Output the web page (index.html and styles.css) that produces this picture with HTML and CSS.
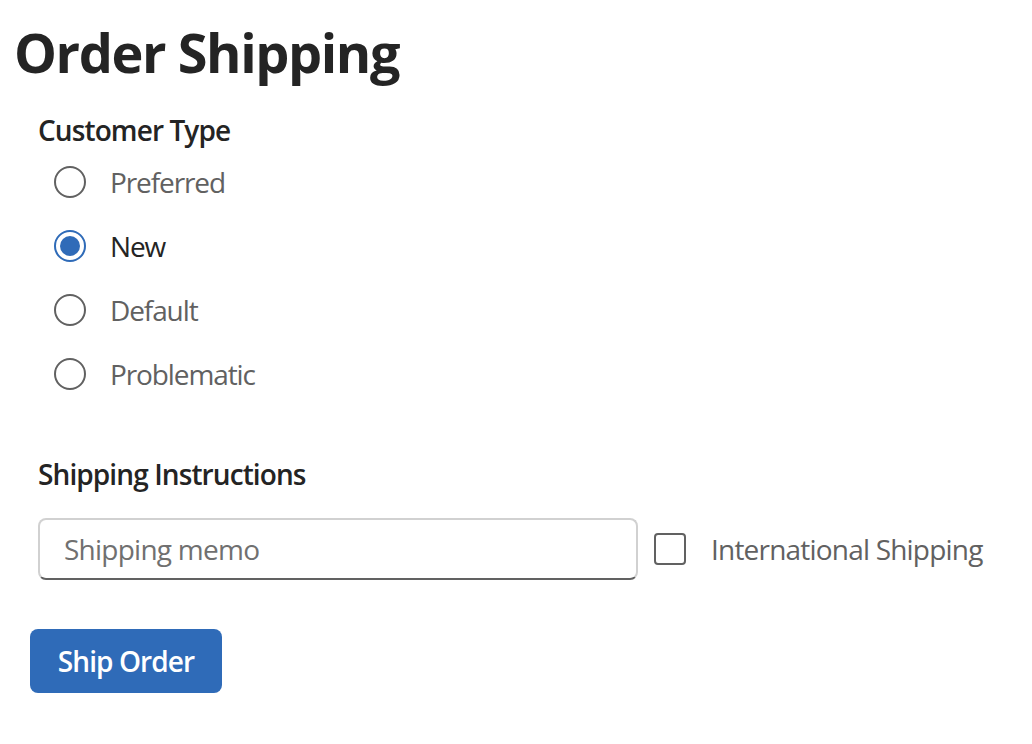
FILE: index.html
```html
<!DOCTYPE html>
<html lang="en">
<head>
<meta charset="utf-8">
<title>Order Shipping</title>
<link rel="stylesheet" href="styles.css">
</head>
<body>
<main class="page">
  <h1 class="title">Order Shipping</h1>
  <form class="form">
    <div class="fields">
      <div class="field">
        <div class="field-label">Customer Type</div>
        <div class="radio-group" role="radiogroup">
          <label class="radio"><input type="radio" name="ctype" value="preferred"><span class="radio-indicator"></span><span class="radio-label">Preferred</span></label>
          <label class="radio"><input type="radio" name="ctype" value="new" checked><span class="radio-indicator"></span><span class="radio-label">New</span></label>
          <label class="radio"><input type="radio" name="ctype" value="default"><span class="radio-indicator"></span><span class="radio-label">Default</span></label>
          <label class="radio"><input type="radio" name="ctype" value="problematic"><span class="radio-indicator"></span><span class="radio-label">Problematic</span></label>
        </div>
      </div>
      <div class="field field-shipping">
        <div class="field-label">Shipping Instructions</div>
        <div class="shipping-row">
          <div class="input-wrap"><input class="text-input" type="text" placeholder="Shipping memo"></div>
          <label class="checkbox"><input type="checkbox"><span class="checkbox-box"></span><span class="checkbox-label">International Shipping</span></label>
        </div>
      </div>
    </div>
    <div class="actions">
      <button type="button" class="btn-primary">Ship Order</button>
    </div>
  </form>
</main>
</body>
</html>
```

FILE: styles.css
```css
* { box-sizing: border-box; }

html, body {
  margin: 0;
  padding: 0;
  background: #ffffff;
}

body {
  font-family: "Segoe UI", "Open Sans", "Noto Sans", sans-serif;
  color: #242424;
}

.page {
  padding-left: 14px;
}

.title {
  margin: 20px 0 0 0;
  font-size: 54px;
  line-height: 64px;
  font-weight: 700;
  letter-spacing: -1.4px;
  color: #242424;
}

.fields {
  padding-left: 24px;
}

.field-label {
  font-size: 28px;
  line-height: 40px;
  padding-top: 4px;
  font-weight: 600;
  letter-spacing: -0.9px;
  color: #242424;
}

.field:first-child .field-label {
  margin-top: 22px;
}

.radio-group {
  display: flex;
  flex-direction: column;
}

.radio {
  display: flex;
  align-items: center;
  height: 64px;
  cursor: pointer;
}

.radio input,
.checkbox input {
  position: absolute;
  opacity: 0;
  width: 0;
  height: 0;
  margin: 0;
}

.radio-indicator {
  flex: none;
  width: 32px;
  height: 32px;
  margin: 0 24px 0 16px;
  border: 2px solid #616161;
  border-radius: 50%;
  display: flex;
  align-items: center;
  justify-content: center;
}

.radio input:checked + .radio-indicator {
  border-color: #2f6bb8;
}

.radio input:checked + .radio-indicator::after {
  content: "";
  width: 20px;
  height: 20px;
  border-radius: 50%;
  background: #2f6bb8;
}

.radio-label {
  font-size: 28px;
  line-height: 40px;
  letter-spacing: -1.1px;
  color: #616161;
}

.radio input:checked ~ .radio-label {
  color: #242424;
}

.field-shipping {
  margin-top: 44px;
}

.shipping-row {
  display: flex;
  align-items: center;
  margin-top: 24px;
}

.input-wrap {
  width: 600px;
  height: 62px;
  border: 2px solid #d1d1d1;
  border-bottom-color: #616161;
  border-radius: 8px;
  display: flex;
  align-items: center;
  padding: 0 24px;
}

.text-input {
  border: none;
  outline: none;
  width: 100%;
  padding: 0;
  font-family: inherit;
  font-size: 28px;
  letter-spacing: -0.75px;
  color: #242424;
  background: transparent;
}

.text-input::placeholder {
  color: #707070;
}

.checkbox {
  display: flex;
  align-items: center;
  margin-left: 16px;
  cursor: pointer;
}

.checkbox-box {
  width: 32px;
  height: 32px;
  border: 2px solid #616161;
  border-radius: 4px;
  margin-right: 25px;
}

.checkbox-label {
  font-size: 28px;
  line-height: 40px;
  letter-spacing: -0.8px;
  color: #616161;
}

.actions {
  padding-left: 16px;
  margin-top: 49px;
}

.btn-primary {
  width: 192px;
  height: 64px;
  border: none;
  border-radius: 8px;
  background: #2f6bb8;
  color: #ffffff;
  font-family: inherit;
  font-size: 28px;
  font-weight: 600;
  letter-spacing: -0.9px;
  padding: 0 20px;
  cursor: pointer;
}
```
